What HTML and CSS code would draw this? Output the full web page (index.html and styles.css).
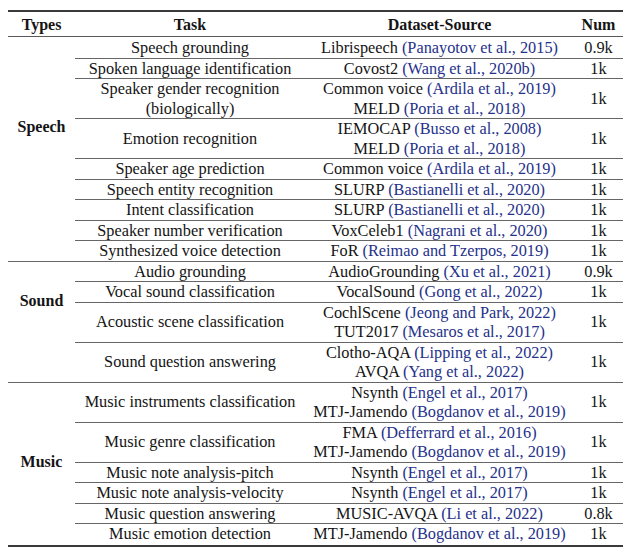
FILE: index.html
```html
<!DOCTYPE html>
<html lang="en">
<head>
<meta charset="utf-8">
<title>Task overview</title>
<link rel="stylesheet" href="styles.css">
</head>
<body>
<table class="tasks">
  <colgroup>
    <col class="c-type">
    <col class="c-task">
    <col class="c-data">
    <col class="c-num">
  </colgroup>
  <thead>
    <tr><th>Types</th><th>Task</th><th>Dataset-Source</th><th>Num</th></tr>
  </thead>
  <tbody class="group speech">
    <tr>
      <td rowspan="9" class="type type-speech">Speech</td>
      <td>Speech grounding</td>
      <td>Librispeech <span class="cite">(Panayotov et al., 2015)</span></td>
      <td>0.9k</td>
    </tr>
    <tr>
      <td>Spoken language identification</td>
      <td>Covost2 <span class="cite">(Wang et al., 2020b)</span></td>
      <td>1k</td>
    </tr>
    <tr>
      <td>Speaker gender recognition<br>(biologically)</td>
      <td>Common voice <span class="cite">(Ardila et al., 2019)</span><br>MELD <span class="cite">(Poria et al., 2018)</span></td>
      <td>1k</td>
    </tr>
    <tr>
      <td>Emotion recognition</td>
      <td>IEMOCAP <span class="cite">(Busso et al., 2008)</span><br>MELD <span class="cite">(Poria et al., 2018)</span></td>
      <td>1k</td>
    </tr>
    <tr>
      <td>Speaker age prediction</td>
      <td>Common voice <span class="cite">(Ardila et al., 2019)</span></td>
      <td>1k</td>
    </tr>
    <tr>
      <td>Speech entity recognition</td>
      <td>SLURP <span class="cite">(Bastianelli et al., 2020)</span></td>
      <td>1k</td>
    </tr>
    <tr>
      <td>Intent classification</td>
      <td>SLURP <span class="cite">(Bastianelli et al., 2020)</span></td>
      <td>1k</td>
    </tr>
    <tr>
      <td>Speaker number verification</td>
      <td>VoxCeleb1 <span class="cite">(Nagrani et al., 2020)</span></td>
      <td>1k</td>
    </tr>
    <tr>
      <td>Synthesized voice detection</td>
      <td>FoR <span class="cite">(Reimao and Tzerpos, 2019)</span></td>
      <td>1k</td>
    </tr>
  </tbody>
  <tbody class="group sound">
    <tr>
      <td rowspan="4" class="type type-sound">Sound</td>
      <td>Audio grounding</td>
      <td>AudioGrounding <span class="cite">(Xu et al., 2021)</span></td>
      <td>0.9k</td>
    </tr>
    <tr>
      <td>Vocal sound classification</td>
      <td>VocalSound <span class="cite">(Gong et al., 2022)</span></td>
      <td>1k</td>
    </tr>
    <tr>
      <td>Acoustic scene classification</td>
      <td>CochlScene <span class="cite">(Jeong and Park, 2022)</span><br>TUT2017 <span class="cite">(Mesaros et al., 2017)</span></td>
      <td>1k</td>
    </tr>
    <tr>
      <td>Sound question answering</td>
      <td>Clotho-AQA <span class="cite">(Lipping et al., 2022)</span><br>AVQA <span class="cite">(Yang et al., 2022)</span></td>
      <td>1k</td>
    </tr>
  </tbody>
  <tbody class="group music">
    <tr>
      <td rowspan="6" class="type type-music">Music</td>
      <td>Music instruments classification</td>
      <td>Nsynth <span class="cite">(Engel et al., 2017)</span><br>MTJ-Jamendo <span class="cite">(Bogdanov et al., 2019)</span></td>
      <td>1k</td>
    </tr>
    <tr>
      <td>Music genre classification</td>
      <td>FMA <span class="cite">(Defferrard et al., 2016)</span><br>MTJ-Jamendo <span class="cite">(Bogdanov et al., 2019)</span></td>
      <td>1k</td>
    </tr>
    <tr>
      <td>Music note analysis-pitch</td>
      <td>Nsynth <span class="cite">(Engel et al., 2017)</span></td>
      <td>1k</td>
    </tr>
    <tr>
      <td>Music note analysis-velocity</td>
      <td>Nsynth <span class="cite">(Engel et al., 2017)</span></td>
      <td>1k</td>
    </tr>
    <tr>
      <td>Music question answering</td>
      <td>MUSIC-AVQA <span class="cite">(Li et al., 2022)</span></td>
      <td>0.8k</td>
    </tr>
    <tr class="last">
      <td>Music emotion detection</td>
      <td>MTJ-Jamendo <span class="cite">(Bogdanov et al., 2019)</span></td>
      <td>1k</td>
    </tr>
  </tbody>
</table>
</body>
</html>
```

FILE: styles.css
```css
html, body {
  background: #ffffff;
}

body {
  margin: 10px 0 0 8px;
  font-family: "Liberation Serif", "Times New Roman", serif;
  font-size: 16.3px;
  color: #141414;
}

.tasks {
  width: 615px;
  table-layout: fixed;
  border-collapse: separate;
  border-spacing: 0;
  border-top: 2px solid #3a3a3a;
  border-bottom: 2px solid #3a3a3a;
  font-family: "Liberation Serif", "Times New Roman", serif;
  font-size: 16.3px;
}

.c-type { width: 67px; }
.c-task { width: 230px; }
.c-data { width: 269px; }
.c-num  { width: 49px; }

.tasks th,
.tasks td {
  padding: 0;
  text-align: center;
  vertical-align: middle;
  line-height: 19.5px;
  white-space: nowrap;
}

.tasks thead th {
  font-weight: bold;
  font-size: 16px;
  padding: 3.25px 0 1.25px;
  border-bottom: 1px solid #5a5a5a;
}

.tasks tbody td {
  border-top: 1px solid #666666;
}

.tasks .speech tr:first-child td {
  border-top: 0;
  padding-top: 1.2px;
}

.tasks tr.last td {
  padding-bottom: 1px;
}

.tasks td.type {
  font-weight: bold;
  font-size: 16px;
  vertical-align: top;
}

.tasks .speech tr:first-child td.type-speech { padding-top: 80px; }
.tasks .sound tr:first-child td.type-sound  { padding-top: 29px; }
.tasks .music tr:first-child td.type-music  { padding-top: 69px; }

.cite {
  color: #25318a;
}
```
